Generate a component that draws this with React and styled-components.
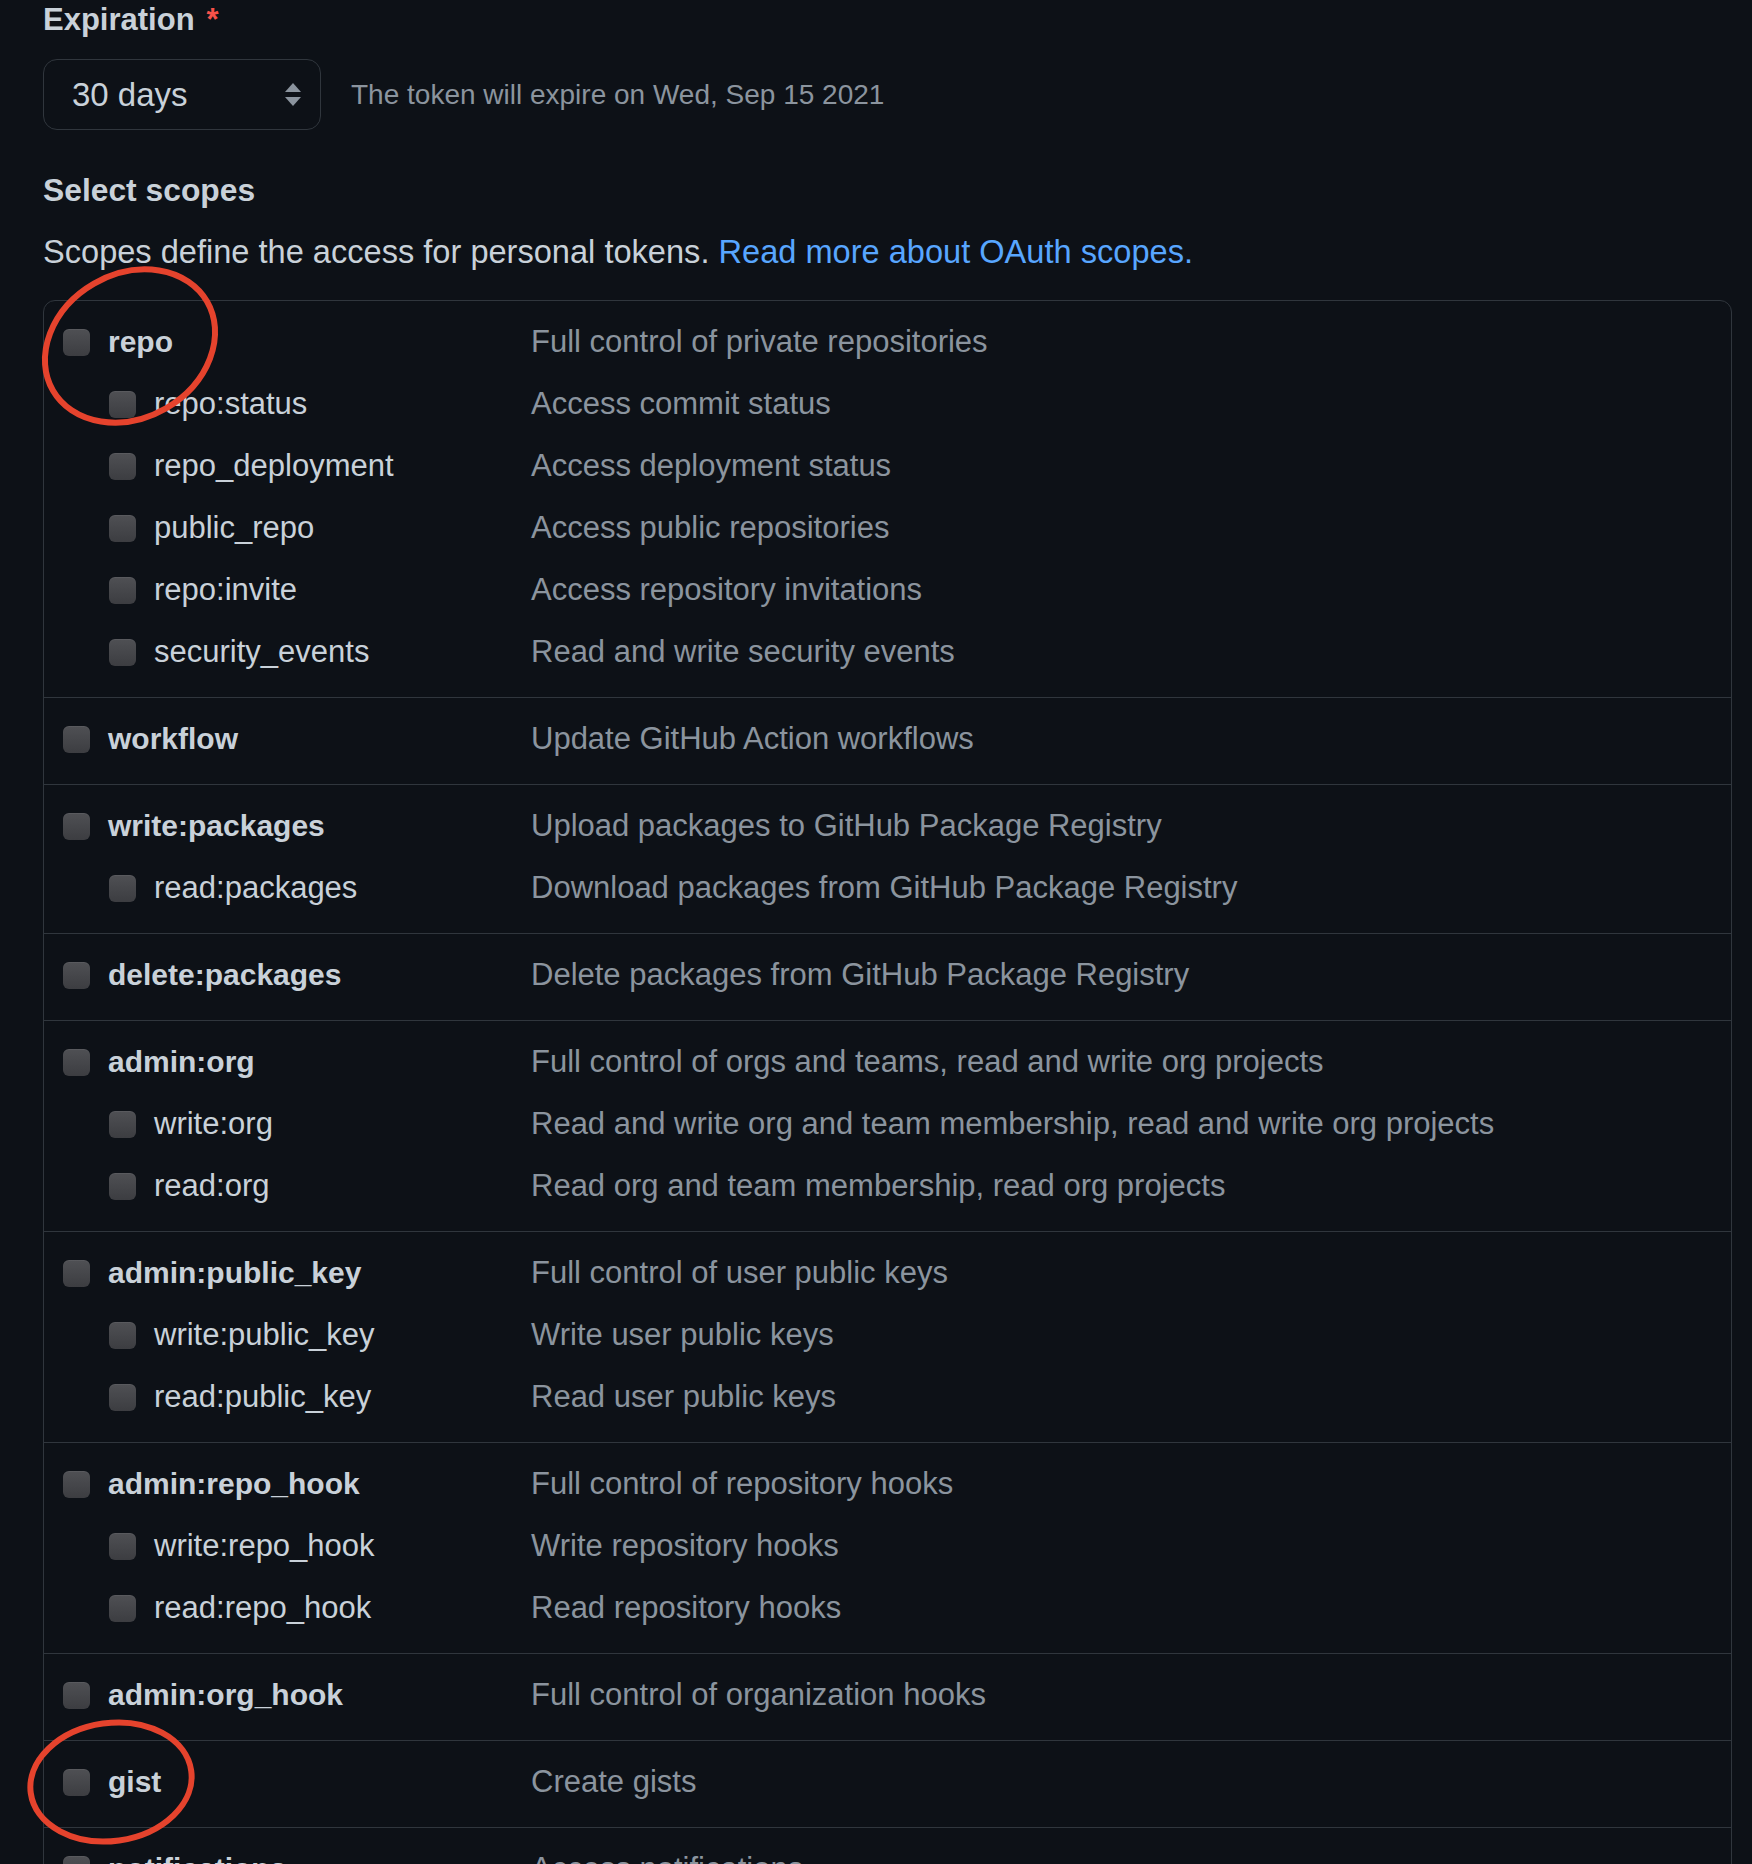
import React from "react";
import styled, { createGlobalStyle } from "styled-components";

const GlobalStyle = createGlobalStyle`
  body {
    margin: 0;
    background: #0d1117;
    font-family: "Liberation Sans", Arial, sans-serif;
    color: #c9d1d9;
  }
`;

const Page = styled.main`
  position: relative;
  padding: 0 20px 40px 43px;
  font-size: 31px;
`;

const Label = styled.div`
  font-weight: 700;
  line-height: 40px;
  font-size: ${(p) => p.$size || "31px"};
  color: #c9d1d9;

  .required {
    color: #f85149;
    margin-left: 12px;
  }
`;

const ExpiryRow = styled.div`
  display: flex;
  align-items: center;
  gap: 30px;
  margin-top: 19px;
`;

const SelectBox = styled.div`
  box-sizing: border-box;
  width: 278px;
  height: 71px;
  border: 1px solid #30363d;
  border-radius: 14px;
  display: flex;
  align-items: center;
  justify-content: space-between;
  padding: 0 19px 0 28px;
  font-size: 33px;
  color: #c9d1d9;
`;

const Note = styled.span`
  font-size: 28px;
  color: #8b949e;
`;

const SectionTitle = styled(Label)`
  margin-top: 40px;
`;

const Lead = styled.p`
  margin: 22px 0 0;
  line-height: 40px;
  font-size: 32.6px;
  color: #c9d1d9;

  a {
    color: #58a6ff;
    text-decoration: none;
  }
`;

const ScopeList = styled.div`
  margin-top: 28px;
  border: 1px solid #30363d;
  border-radius: 12px;
`;

const Group = styled.div`
  padding: 10px 0 14px 19px;
  & + & {
    border-top: 1px solid #30363d;
  }
`;

const Row = styled.div`
  display: grid;
  grid-template-columns: 468px 1fr;
  align-items: center;
  height: 62px;
`;

const Name = styled.div`
  display: flex;
  align-items: center;
  gap: 18px;
  padding-left: ${(p) => (p.$sub ? "46px" : "0")};
  font-weight: ${(p) => (p.$sub ? 400 : 700)};
  font-size: ${(p) => (p.$sub ? "31px" : "30px")};
  color: #c9d1d9;
`;

const Check = styled.span`
  flex: none;
  width: 27px;
  height: 27px;
  border-radius: 6px;
  background: linear-gradient(#4f5054, #3c3d41);
  box-shadow: inset 0 1px 0 rgba(255, 255, 255, 0.06);
`;

const Desc = styled.div`
  color: #8b949e;
`;

const Mark = styled.svg`
  position: absolute;
  pointer-events: none;
  overflow: visible;
`;

const Arrows = () => (
  <svg width="16" height="23" viewBox="0 0 16 23">
    <path d="M8 0 L16 9 H0 Z" fill="#8b949e" />
    <path d="M0 14 H16 L8 23 Z" fill="#8b949e" />
  </svg>
);

const scopes = [
  {
    name: "repo",
    desc: "Full control of private repositories",
    subs: [
      ["repo:status", "Access commit status"],
      ["repo_deployment", "Access deployment status"],
      ["public_repo", "Access public repositories"],
      ["repo:invite", "Access repository invitations"],
      ["security_events", "Read and write security events"],
    ],
  },
  { name: "workflow", desc: "Update GitHub Action workflows", subs: [] },
  {
    name: "write:packages",
    desc: "Upload packages to GitHub Package Registry",
    subs: [["read:packages", "Download packages from GitHub Package Registry"]],
  },
  { name: "delete:packages", desc: "Delete packages from GitHub Package Registry", subs: [] },
  {
    name: "admin:org",
    desc: "Full control of orgs and teams, read and write org projects",
    subs: [
      ["write:org", "Read and write org and team membership, read and write org projects"],
      ["read:org", "Read org and team membership, read org projects"],
    ],
  },
  {
    name: "admin:public_key",
    desc: "Full control of user public keys",
    subs: [
      ["write:public_key", "Write user public keys"],
      ["read:public_key", "Read user public keys"],
    ],
  },
  {
    name: "admin:repo_hook",
    desc: "Full control of repository hooks",
    subs: [
      ["write:repo_hook", "Write repository hooks"],
      ["read:repo_hook", "Read repository hooks"],
    ],
  },
  { name: "admin:org_hook", desc: "Full control of organization hooks", subs: [] },
  { name: "gist", desc: "Create gists", subs: [] },
  { name: "notifications", desc: "Access notifications", subs: [] },
];

const App = () => {
  return (
    <Page>
      <GlobalStyle />
      <Label>
        Expiration<span className="required">*</span>
      </Label>
      <ExpiryRow>
        <SelectBox>
          <span>30 days</span>
          <Arrows />
        </SelectBox>
        <Note>The token will expire on Wed, Sep 15 2021</Note>
      </ExpiryRow>

      <SectionTitle $size="31.8px">Select scopes</SectionTitle>
      <Lead>
        Scopes define the access for personal tokens. <a href="#">Read more about OAuth scopes.</a>
      </Lead>

      <ScopeList>
        {scopes.map((s) => (
          <Group key={s.name}>
            <Row>
              <Name>
                <Check />
                {s.name}
              </Name>
              <Desc>{s.desc}</Desc>
            </Row>
            {s.subs.map(([n, d]) => (
              <Row key={n}>
                <Name $sub>
                  <Check />
                  {n}
                </Name>
                <Desc>{d}</Desc>
              </Row>
            ))}
          </Group>
        ))}
      </ScopeList>

      {/* red hand-drawn annotations */}
      <Mark style={{ left: 40, top: 267 }} width="180" height="158">
        <ellipse cx="90" cy="79" rx="89" ry="72" transform="rotate(-30 90 79)" fill="none" stroke="#e5432d" strokeWidth="6" />
      </Mark>
      <Mark style={{ left: 27, top: 1720 }} width="168" height="124">
        <ellipse cx="84" cy="62" rx="81" ry="59" transform="rotate(-8 84 62)" fill="none" stroke="#e5432d" strokeWidth="6" />
      </Mark>
    </Page>
  );
};

export default App;
